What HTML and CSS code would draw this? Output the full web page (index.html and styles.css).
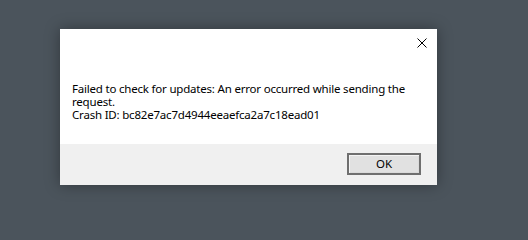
FILE: index.html
```html
<!DOCTYPE html>
<html>
<head>
<meta charset="utf-8">
<link rel="stylesheet" href="styles.css">
</head>
<body>
<div class="dialog">
  <div class="content">
    <div class="titlebar">
      <div class="close">
        <svg width="10" height="10" viewBox="0 0 10 10"><path d="M0.5 0.5 L9.5 9.5 M9.5 0.5 L0.5 9.5" stroke="#000" stroke-width="1" fill="none"/></svg>
      </div>
    </div>
    <div class="message">
      <div>Failed to check for updates: An error occurred while sending the request.</div>
      <div>Crash ID: bc82e7ac7d4944eeaefca2a7c18ead01</div>
    </div>
  </div>
  <div class="footer">
    <button class="ok">OK</button>
  </div>
</div>
</body>
</html>
```
FILE: styles.css
```css
html, body {
  margin: 0;
  height: 100%;
}
body {
  background: #4b545c;
  padding: 29px 0 0 60px;
  box-sizing: border-box;
  font-family: "Noto Sans", "Open Sans", sans-serif;
  font-size: 11.5px;
  color: #000;
}
.dialog {
  width: 377px;
  height: 156px;
  background: #fff;
  display: flex;
  flex-direction: column;
  box-shadow: 0 0 14px rgba(0, 0, 0, 0.35);
}
.content {
  flex: 1;
  display: flex;
  flex-direction: column;
}
.titlebar {
  display: flex;
  justify-content: flex-end;
  padding: 9px 10px 0 0;
  height: 10px;
}
.close {
  width: 10px;
  height: 10px;
  display: flex;
}
.message {
  padding: 34px 12px 0 12px;
  line-height: 13px;
  letter-spacing: -0.2px;
}
.footer {
  height: 41px;
  background: #f0f0f0;
  display: flex;
  justify-content: flex-end;
  align-items: flex-start;
  padding: 9px 16px 0 0;
  box-sizing: border-box;
}
.ok {
  width: 74px;
  height: 22px;
  margin: 0;
  padding: 0;
  background: #e1e1e1;
  border: 2px solid #6f6f6f;
  box-shadow: inset 1px 1px 0 #f4f4f4, inset -1px -1px 0 #dadada;
  font-family: "Noto Sans", "Open Sans", sans-serif;
  font-size: 11.5px;
  color: #000;
  line-height: 16px;
}
```
